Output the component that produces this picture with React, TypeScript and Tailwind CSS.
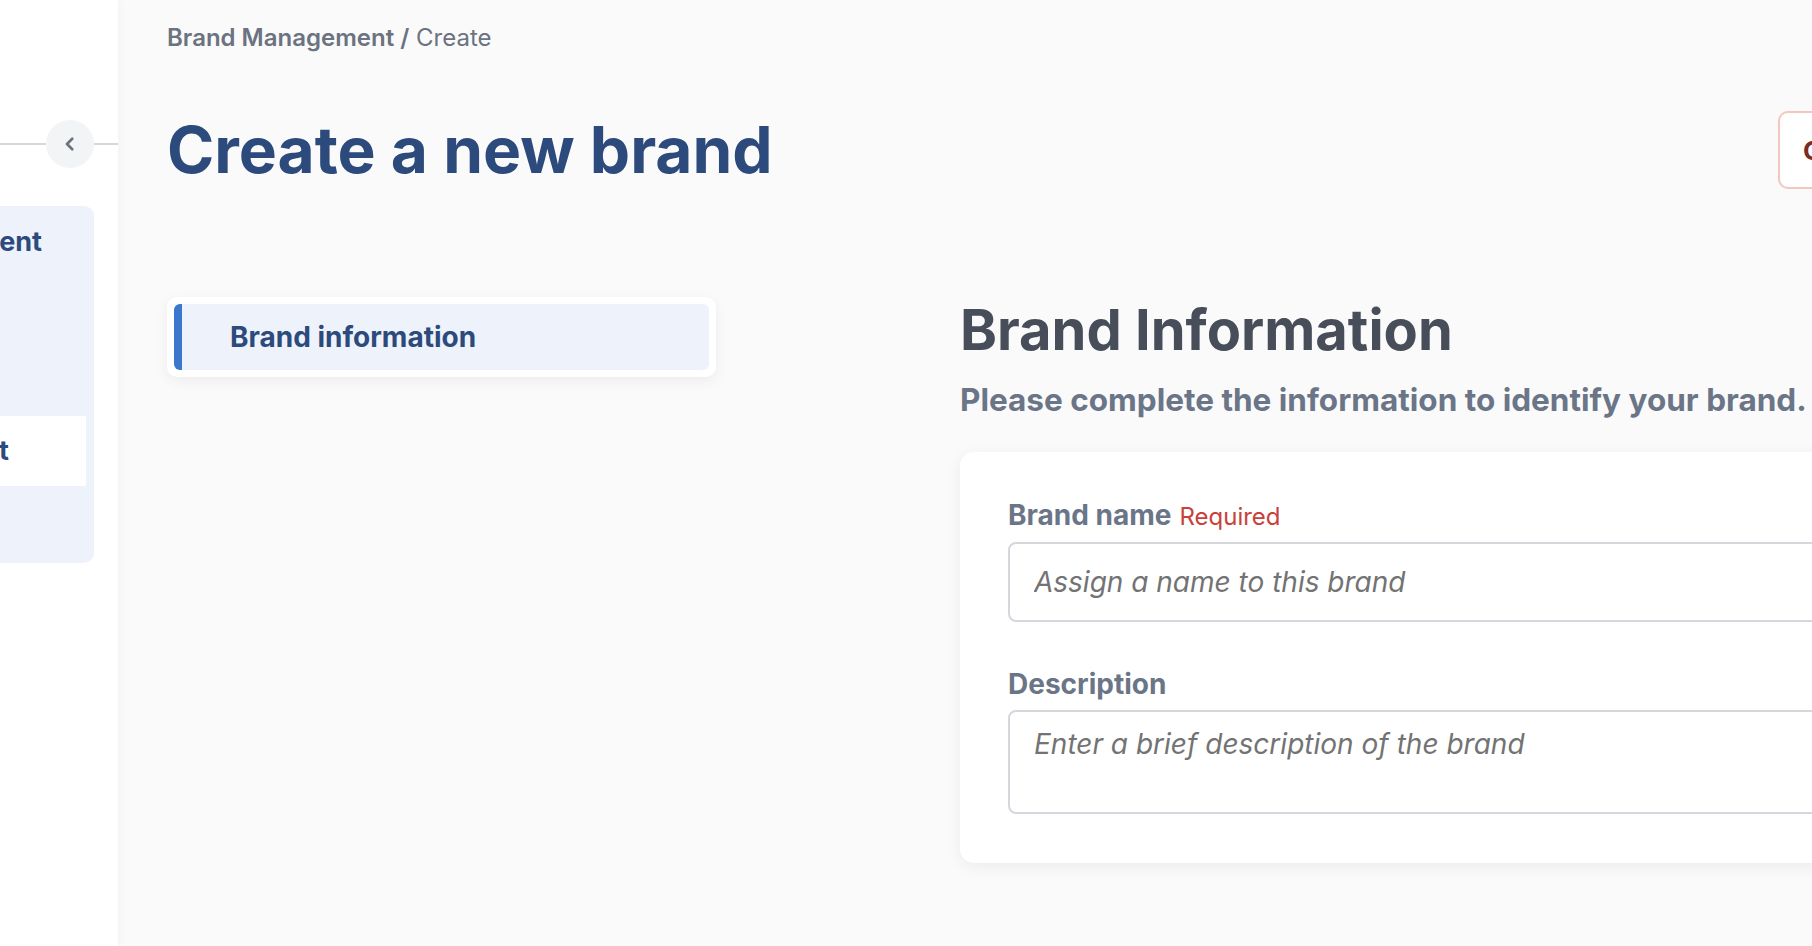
import React from "react";

function ChevronLeft() {
  return (
    <svg width="18" height="18" viewBox="0 0 24 24" fill="none" stroke="#6b7280" strokeWidth="3.6" strokeLinecap="round" strokeLinejoin="round">
      <path d="M15 5l-7 7 7 7" />
    </svg>
  );
}

export default function App() {
  return (
    <div className="flex w-[1812px] h-[946px] overflow-hidden bg-[#fafafa] font-['Inter',sans-serif]">
      <aside className="relative z-10 w-[118px] shrink-0 bg-white shadow-[2px_0_8px_rgba(0,0,0,0.03)]">
        <div className="mt-[120px] flex items-center">
          <div className="h-[2px] flex-1 bg-[#d6d6dc]" />
          <button className="flex h-[48px] w-[48px] items-center justify-center rounded-full bg-[#f3f4f6]">
            <ChevronLeft />
          </button>
          <div className="h-[2px] w-[24px] bg-[#d6d6dc]" />
        </div>
        <div className="mt-[38px] h-[357px] w-[94px] overflow-hidden rounded-r-[10px] bg-[#eef2fa]">
          <div className="ml-[-306px] w-[400px]">
            <div className="flex h-[72px] items-center justify-end pr-[50px] text-[27px] font-bold text-[#2c4a7c]">
              Brand Managem<span className="pr-[2px]">ent</span>
            </div>
            <div className="h-[138px]" />
            <div className="mr-[8px] flex h-[70px] items-center justify-end bg-white pr-[77px] text-[27px] font-bold text-[#2c4a7c]">
              Brand List
            </div>
          </div>
        </div>
      </aside>

      <main className="flex-1 pl-[49px] pt-[21px]">
        <div className="text-[24px] leading-[34px] text-[#6b7280]">
          <span className="font-semibold">Brand Management /</span> <span>Create</span>
        </div>

        <div className="mt-[56px] flex w-[1761px] items-center justify-between">
          <h1 className="text-[64px] font-bold leading-[78px] text-[#2c4a7c]">Create a new brand</h1>
          <button className="h-[78px] w-[150px] shrink-0 rounded-[10px] border-2 border-[#f5c6bb] bg-white pl-[23px] text-left text-[26px] font-bold text-[#7a2b22]">
            Cancel
          </button>
        </div>

        <div className="mt-[108px] grid grid-cols-[549px_1000px] gap-x-[244px]">
          <div>
            <div className="rounded-[10px] bg-white p-[7px] shadow-[0_4px_14px_rgba(0,0,0,0.06)]">
              <div className="flex h-[66px] items-center overflow-hidden rounded-[6px] bg-[#eef2fa]">
                <div className="h-full w-[8px] bg-[#3b77cc]" />
                <span className="pl-[48px] text-[28px] font-bold text-[#2c4a7c]">Brand information</span>
              </div>
            </div>
          </div>

          <div>
            <h2 className="text-[56px] font-bold leading-[66px] text-[#474d59]">Brand Information</h2>
            <p className="mt-[19px] text-[31.5px] font-bold leading-[36px] text-[#6b7588]">
              Please complete the information to identify your brand.
            </p>
            <div className="mt-[34px] rounded-[14px] bg-white px-[48px] pb-[49px] pt-[47px] shadow-[0_4px_16px_rgba(0,0,0,0.06)]">
              <label className="flex items-baseline gap-[8px] leading-[32px]">
                <span className="text-[28px] font-bold text-[#6b7588]">Brand name</span>
                <span className="text-[24px] text-[#c8413a]">Required</span>
              </label>
              <input
                className="mt-[9px] h-[80px] w-full rounded-[8px] border-2 border-[#d6d6dc] bg-white px-[24px] text-[28px] outline-none placeholder:italic placeholder:text-[#737373]"
                placeholder="Assign a name to this brand"
              />
              <label className="mt-[46px] block text-[28px] font-bold leading-[32px] text-[#6b7588]">Description</label>
              <textarea
                className="mt-[10px] block h-[104px] w-full resize-none rounded-[8px] border-2 border-[#d6d6dc] bg-white px-[24px] py-[14px] text-[28px] leading-[36px] outline-none placeholder:italic placeholder:text-[#737373]"
                placeholder="Enter a brief description of the brand"
              />
            </div>
          </div>
        </div>
      </main>
    </div>
  );
}
